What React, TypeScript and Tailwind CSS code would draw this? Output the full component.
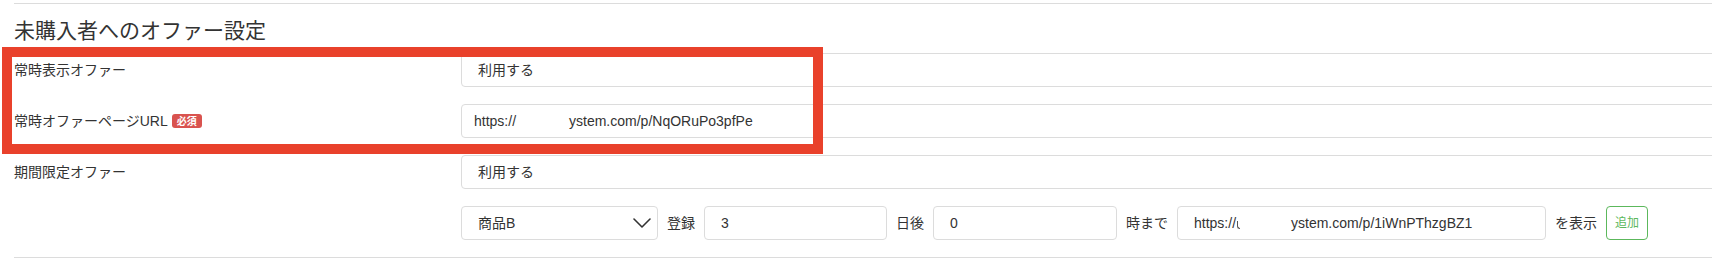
import React from "react";

const font = {
  fontFamily: '"Liberation Sans", "Noto Sans CJK JP", sans-serif',
};

function Chevron() {
  return (
    <svg width="18" height="10" viewBox="0 0 18 10" fill="none">
      <path d="M1 1 L9 9 L17 1" stroke="#333" strokeWidth="1.6" strokeLinecap="round" strokeLinejoin="round" />
    </svg>
  );
}

function Row({ label, children }: { label?: React.ReactNode; children: React.ReactNode }) {
  return (
    <div className="flex h-[34px] items-center">
      <div className="w-[447px] shrink-0 flex items-center text-[14px] text-[#333]">{label}</div>
      <div className="flex flex-1 items-center h-full">{children}</div>
    </div>
  );
}

export default function App() {
  return (
    <div className="relative w-full h-[258px] overflow-hidden bg-white" style={font}>
      <div className="w-[1740px] pl-[14px]">
        <div className="mt-[3px] border-t border-[#dcdcdc]" />
        <div className="mt-[11px] h-[32px] flex items-center text-[21px] text-[#333]">
          未購入者へのオファー設定
        </div>
        <div className="mt-[6px] flex flex-col gap-[17px]">
          <Row label="常時表示オファー">
            <div className="h-full flex-1 flex items-center rounded-[4px] border border-[#dcdcdc] px-4 text-[14px] text-[#333]">
              利用する
            </div>
          </Row>
          <Row
            label={
              <span className="flex items-center">
                常時オファーページURL
                <span className="ml-[4px] inline-flex h-[14px] w-[30px] items-center justify-center rounded-[3px] bg-[#d9534f] text-[10px] font-bold text-white">
                  必須
                </span>
              </span>
            }
          >
            <div className="h-full flex-1 flex items-center rounded-[4px] border border-[#dcdcdc] px-3 text-[14px] text-[#333] whitespace-pre">
              <span>https://</span>
              <span className="inline-block w-[53px]" />
              <span>ystem.com/p/NqORuPo3pfPe</span>
            </div>
          </Row>
          <Row label="期間限定オファー">
            <div className="h-full flex-1 flex items-center rounded-[4px] border border-[#dcdcdc] px-4 text-[14px] text-[#333]">
              利用する
            </div>
          </Row>
          <Row>
            <div className="flex h-full items-center gap-[9px] text-[14px] text-[#333]">
              <div className="h-full w-[197px] flex items-center justify-between rounded-[4px] border border-[#dcdcdc] pl-4 pr-[6px]">
                <span>商品B</span>
                <Chevron />
              </div>
              <span>登録</span>
              <div className="h-full w-[183px] flex items-center rounded-[4px] border border-[#dcdcdc] px-4">3</div>
              <span>日後</span>
              <div className="h-full w-[184px] flex items-center rounded-[4px] border border-[#dcdcdc] px-4">0</div>
              <span>時まで</span>
              <div className="h-full w-[369px] flex items-center rounded-[4px] border border-[#dcdcdc] px-4 whitespace-pre">
                <span>https://</span>
                <span className="ml-[1px] mt-[3px] inline-block h-[8px] w-[3px] rounded-bl-[3px] border-b border-l border-[#555]" />
                <span className="inline-block w-[51px]" />
                <span>ystem.com/p/1iWnPThzgBZ1</span>
              </div>
              <span>を表示</span>
              <div className="h-full w-[42px] flex items-center justify-center rounded-[4px] border border-[#5cb85c] text-[12px] text-[#5cb85c]">
                追加
              </div>
            </div>
          </Row>
        </div>
        <div className="mt-[17px] border-t border-[#dcdcdc]" />
      </div>
      <div className="pointer-events-none absolute left-[2px] top-[47px] h-[107px] w-[821px] border-[10px] border-[#e9412b]" />
    </div>
  );
}
